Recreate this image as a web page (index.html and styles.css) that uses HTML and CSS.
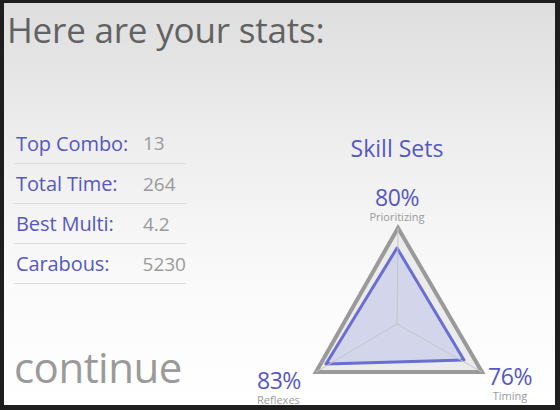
FILE: index.html
```html
<!DOCTYPE html>
<html>
<head>
<meta charset="utf-8">
<link rel="stylesheet" href="styles.css">
</head>
<body>
<div class="frame">
  <h1 class="title">Here are your stats:</h1>
  <div class="main">
    <div class="left">
      <ul class="stats">
        <li class="row"><span class="label">Top Combo:</span><span class="value">13</span></li>
        <li class="row"><span class="label">Total Time:</span><span class="value">264</span></li>
        <li class="row"><span class="label">Best Multi:</span><span class="value">4.2</span></li>
        <li class="row"><span class="label">Carabous:</span><span class="value">5230</span></li>
      </ul>
      <div class="continue">continue</div>
    </div>
    <div class="skills">
      <div class="skills-title">Skill Sets</div>
      <div class="chart">
        <svg class="radar" width="304" height="240" viewBox="0 0 304 240">
          <polygon points="153,63 71,207 237,207" fill="#ebebeb" stroke="#9a9a9a" stroke-width="4" stroke-linejoin="miter"/>
          <polygon points="152,83 81,199 219,195" fill="#d3d5ea" stroke="#6a6ed2" stroke-width="3" stroke-linejoin="round"/>
          <line x1="152" y1="159" x2="153" y2="63" stroke="#c4c4cc" stroke-width="1"/>
          <line x1="152" y1="159" x2="71" y2="207" stroke="#c4c4cc" stroke-width="1"/>
          <line x1="152" y1="159" x2="237" y2="207" stroke="#c4c4cc" stroke-width="1"/>
        </svg>
        <div class="axis axis-top"><span class="pct">80%</span><span class="name">Prioritizing</span></div>
        <div class="axis axis-left"><span class="pct">83%</span><span class="name">Reflexes</span></div>
        <div class="axis axis-right"><span class="pct">76%</span><span class="name">Timing</span></div>
      </div>
    </div>
  </div>
</div>
</body>
</html>
```
FILE: styles.css
```css
html, body {
  margin: 0;
  padding: 0;
  background: #1e1e1e;
}
body {
  width: 560px;
  height: 410px;
  overflow: hidden;
  font-family: "Open Sans", "Noto Sans", sans-serif;
}
.frame {
  box-sizing: border-box;
  width: 560px;
  height: 410px;
  border-style: solid;
  border-color: #1e1e1e;
  border-width: 3px 5px 5px 4px;
  background: linear-gradient(to bottom, #dedede 0%, #eeeeee 35%, #fafafa 70%, #ffffff 100%);
  display: flex;
  flex-direction: column;
}
.title {
  margin: 0;
  padding: 5px 0 0 3px;
  font-size: 35px;
  font-weight: 400;
  line-height: 44px;
  color: #626262;
  letter-spacing: -0.2px;
}
.main {
  flex: 1;
  display: flex;
  padding-top: 71px;
}
.left {
  width: 172px;
  margin-left: 10px;
  display: flex;
  flex-direction: column;
}
.stats {
  list-style: none;
  margin: 0;
  padding: 0;
}
.row {
  display: flex;
  align-items: center;
  height: 39px;
  border-bottom: 1px solid #dcdcdc;
}
.row:first-child {
  height: 40px;
}
.label {
  width: 127px;
  padding-left: 2px;
  font-size: 20px;
  color: #5558c0;
  letter-spacing: -0.1px;
}
.value {
  font-size: 19px;
  color: #9a9a9a;
}
.continue {
  margin-top: auto;
  padding-bottom: 15px;
  font-size: 42px;
  line-height: 46px;
  color: #9a9a9a;
  letter-spacing: -0.5px;
}
.skills {
  margin-left: 59px;
  width: 304px;
  display: flex;
  flex-direction: column;
}
.skills-title {
  text-align: center;
  font-size: 23px;
  line-height: 30px;
  color: #5558c0;
  margin-top: 10px;
}
.chart {
  position: relative;
  flex: 1;
}
.radar {
  position: absolute;
  left: 0;
  top: 2px;
}
.axis {
  position: absolute;
  display: flex;
  flex-direction: column;
}
.pct {
  font-size: 23px;
  line-height: 26px;
  color: #5558c0;
  letter-spacing: -0.5px;
}
.name {
  font-size: 11px;
  line-height: 13px;
  color: #9a9a9a;
}
.axis-top {
  left: 102px;
  width: 100px;
  top: 21px;
  align-items: center;
}
.axis-left {
  left: 12px;
  top: 204px;
  align-items: flex-start;
}
.axis-right {
  left: 241px;
  width: 48px;
  top: 200px;
  align-items: center;
}
```
